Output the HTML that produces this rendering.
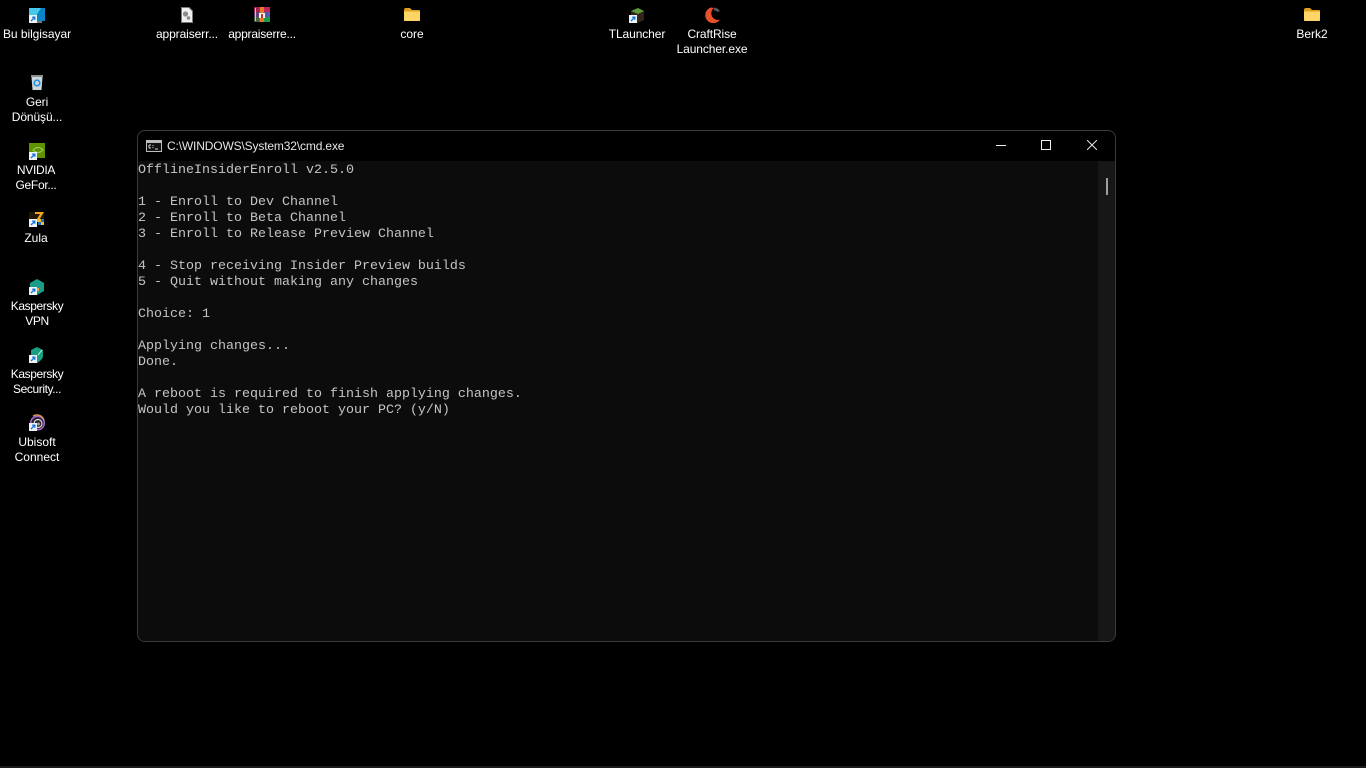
<!DOCTYPE html>
<html lang="tr">
<head>
<meta charset="utf-8">
<title>cmd</title>
<style>
html,body{margin:0;padding:0;background:#000;width:1366px;height:768px;overflow:hidden}
body{position:relative;font-family:"Liberation Sans",sans-serif}
.l{position:absolute;color:#fff;font-size:12px;line-height:15px;text-align:center;width:90px;white-space:nowrap}
#ic{position:absolute;left:0;top:0;width:1366px;height:768px}
#win{position:absolute;left:137px;top:130px;width:979px;height:512px;box-sizing:border-box;border:1px solid #3a3a3a;border-radius:8px;background:#000;overflow:hidden}
#con{position:absolute;left:0;top:30px;width:977px;height:480px;background:#0c0c0c}
#bar{position:absolute;right:0;top:0;width:17px;height:480px;background:#171717}
#thumb{position:absolute;left:8px;top:17px;width:2px;height:17px;background:#9e9e9e}
pre{position:absolute;left:0;top:2px;margin:0;font-family:"Liberation Mono",monospace;font-size:13.33px;line-height:16px;color:#c4c4c4}
#t{position:absolute;left:29px;top:8px;font-size:12px;line-height:15px;color:#e6e6e6;white-space:nowrap;letter-spacing:-.15px}
#b{position:absolute;left:0;top:766px;width:1366px;height:2px;background:#1c1c1c}
</style>
</head>
<body>

<svg id="ic" viewBox="0 0 1366 768">
  <defs>
    <g id="sc"><rect x="0" y="0" width="8" height="8" fill="#eef3f8"/><path d="M2 6L5.500 2.500M3.200 2.200H5.800V4.800" stroke="#1a78dc" stroke-width="1.400" fill="none"/></g>
    <g id="fd"><path d="M0 2Q0 0 2 0H6L8 2H15Q16 2 16 3V12Q16 13 15 13H1Q0 13 0 12Z" fill="#e0a01c"/><path d="M0 3.500H16V12Q16 13 15 13H1Q0 13 0 12Z" fill="#fcd566"/></g>
  </defs>

  <!-- Bu bilgisayar -->
  <rect x="29" y="8" width="16" height="13" fill="#0a84c8"/>
  <path d="M29 8H41L33 21H29Z" fill="#45c8ea"/>
  <rect x="37" y="21" width="5" height="2" fill="#777"/>
  <use href="#sc" x="29" y="15"/>

  <!-- file -->
  <path d="M181.500 7.500H189L192.500 11V22.500H181.500Z" fill="#f0f0f0" stroke="#7a7a7a"/>
  <circle cx="185.500" cy="14" r="2.600" fill="#8a8a8a"/>
  <circle cx="188.500" cy="18" r="1.800" fill="#8a8a8a"/>

  <!-- winrar -->
  <rect x="254" y="7" width="16" height="5" fill="#c2255c"/>
  <rect x="254" y="12" width="16" height="5" fill="#5458ac"/>
  <rect x="254" y="17" width="16" height="5" fill="#1c9a4c"/>
  <rect x="260" y="7" width="4" height="15" fill="#e87a24"/>
  <rect x="254" y="7" width="5" height="15" fill="#7a1f3a" opacity=".45"/>
  <rect x="255" y="8" width="1" height="13" fill="#efd040"/>
  <rect x="259" y="13" width="6" height="5" fill="#f4f4f4"/>
  <rect x="261" y="14" width="2" height="4" fill="#c83030"/>

  <!-- folders -->
  <use href="#fd" x="404" y="8"/>
  <use href="#fd" x="1304" y="8"/>

  <!-- TLauncher -->
  <path d="M631 11L638 8L644 11V20L638 23L631 20Z" fill="#33251a"/>
  <path d="M631 11L638 8L644 11L638 14Z" fill="#5c9a3a"/>
  <use href="#sc" x="629" y="15"/>

  <!-- CraftRise -->
  <path d="M711 7.500A8 8 0 1 0 720 19.500A6.500 6.500 0 0 1 711.500 15A6.500 6.500 0 0 1 714 8Z" fill="#e8502a"/>
  <path d="M714 7.500A8 8 0 0 1 720 11L717.500 12A4.500 4.500 0 0 0 714 10.500Z" fill="#555"/>

  <!-- Recycle -->
  <path d="M31.500 77H42.500L41.500 90H32.500Z" fill="#cdd6da"/>
  <rect x="31" y="75" width="12" height="2" fill="#8d8d8d"/>
  <circle cx="37" cy="83" r="2.800" fill="none" stroke="#1f8fe0" stroke-width="1.600"/>

  <!-- NVIDIA -->
  <rect x="29" y="143" width="16" height="15" fill="#5f9400"/>
  <path d="M33 150Q38 145 43 150Q38 155 33 150Z" fill="none" stroke="#a6cc66"/>
  <use href="#sc" x="29" y="152"/>

  <!-- Zula -->
  <rect x="29" y="212" width="15" height="8" fill="#241505"/>
  <path d="M35 212H44L39 220H42L41 222H35L40 214H35Z" fill="#e8a820"/>
  <rect x="38" y="219" width="3" height="3" fill="#f4c020"/>
  <rect x="41" y="219" width="3" height="3" fill="#1f6fc0"/>
  <rect x="38" y="222" width="3" height="3" fill="#1f6fc0"/>
  <rect x="41" y="222" width="3" height="3" fill="#f4c020"/>
  <use href="#sc" x="29" y="219"/>

  <!-- Kaspersky VPN -->
  <path d="M37 279L44 283V291L37 295L30 291V283Z" fill="#1a9e8a"/>
  <rect x="37" y="288" width="2" height="3" fill="#e8a030"/>
  <use href="#sc" x="29" y="287"/>

  <!-- Kaspersky Security -->
  <path d="M31 350L37 347L43 350V357Q42 360 37 363Q32 360 31 357Z" fill="#1a9e80"/>
  <path d="M38 355L42 350" stroke="#d8f0e8"/>
  <use href="#sc" x="29" y="355"/>

  <!-- Ubisoft -->
  <circle cx="37.500" cy="423" r="7.500" fill="#2a2030"/>
  <circle cx="37.500" cy="423" r="6.800" fill="none" stroke="#a868c8" stroke-width="1.500"/>
  <path d="M33 416A7.500 7.500 0 0 1 44 420" stroke="#e0a040" stroke-width="1.200" fill="none"/>
  <circle cx="38" cy="423.500" r="4" fill="none" stroke="#d8d8d8" stroke-width="1.200"/>
  <circle cx="38.500" cy="424" r="1.500" fill="#999"/>
  <use href="#sc" x="29" y="423"/>
</svg>

<div class="l" style="left:-8px;top:27px;letter-spacing:-.05px">Bu bilgisayar</div>
<div class="l" style="left:142px;top:27px;letter-spacing:-.1px">appraiserr...</div>
<div class="l" style="left:217px;top:27px;letter-spacing:-.22px">appraiserre...</div>
<div class="l" style="left:367px;top:27px">core</div>
<div class="l" style="left:592px;top:27px;letter-spacing:-.1px">TLauncher</div>
<div class="l" style="left:667px;top:27px;letter-spacing:-.1px">CraftRise<br>Launcher.exe</div>
<div class="l" style="left:1267px;top:27px">Berk2</div>
<div class="l" style="left:-8px;top:95px;letter-spacing:-.1px">Geri<br>Dönüşü...</div>
<div class="l" style="left:-9px;top:163px;letter-spacing:-.3px">NVIDIA<br>GeFor...</div>
<div class="l" style="left:-9px;top:231px">Zula</div>
<div class="l" style="left:-8px;top:299px;letter-spacing:-.4px">Kaspersky<br>VPN</div>
<div class="l" style="left:-8px;top:367px;letter-spacing:-.4px">Kaspersky<br>Security...</div>
<div class="l" style="left:-8px;top:435px">Ubisoft<br>Connect</div>

<div id="win">
  <svg style="position:absolute;left:8px;top:9px" width="16" height="12" viewBox="0 0 16 12"><rect x=".5" y=".5" width="15" height="11" fill="#111" stroke="#bdbdbd"/><rect x="1" y="1" width="14" height="2" fill="#bdbdbd"/><path d="M3 5H5M3 8H5M3 5V8M7 5V6M7 7V8M9 9H12" stroke="#d0d0d0" fill="none"/></svg>
  <div id="t">C:\WINDOWS\System32\cmd.exe</div>
  <svg style="position:absolute;left:858px;top:9px" width="10" height="10"><rect x="0" y="5" width="10" height="1" fill="#f0f0f0"/></svg>
  <svg style="position:absolute;left:903px;top:9px" width="10" height="10"><rect x=".5" y=".5" width="9" height="9" fill="none" stroke="#f0f0f0"/></svg>
  <svg style="position:absolute;left:949px;top:9px" width="10" height="10"><path d="M0 0L10 10M10 0L0 10" stroke="#e8e8e8" fill="none"/></svg>
  <div id="con">
    <pre>OfflineInsiderEnroll v2.5.0

1 - Enroll to Dev Channel
2 - Enroll to Beta Channel
3 - Enroll to Release Preview Channel

4 - Stop receiving Insider Preview builds
5 - Quit without making any changes

Choice: 1

Applying changes...
Done.

A reboot is required to finish applying changes.
Would you like to reboot your PC? (y/N)</pre>
    <div id="bar"><div id="thumb"></div></div>
  </div>
</div>

<div id="b"></div>
</body>
</html>
